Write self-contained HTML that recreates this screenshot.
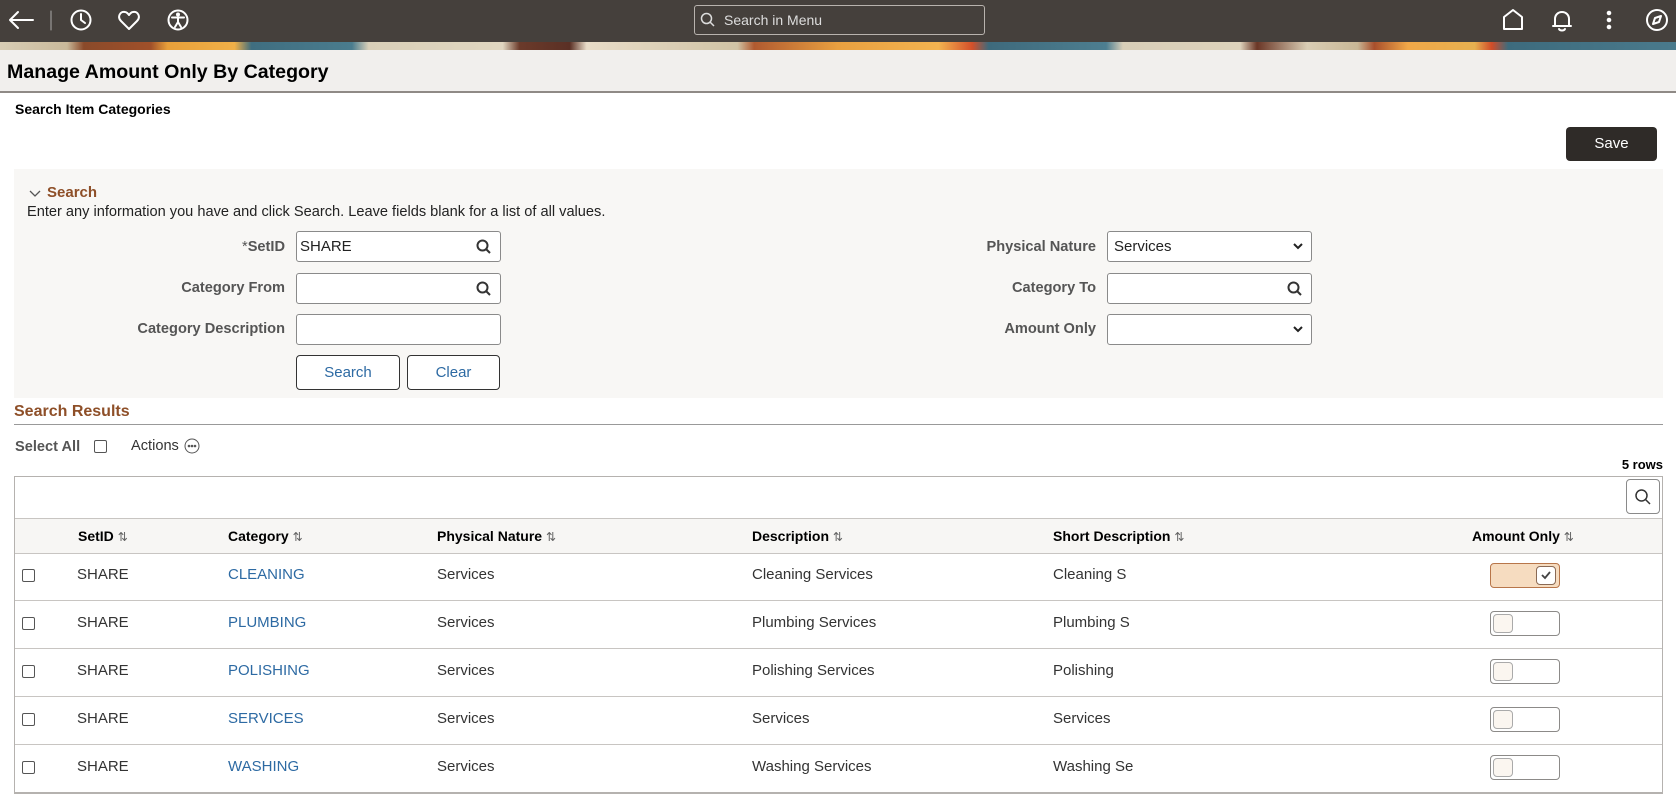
<!DOCTYPE html>
<html><head><meta charset="utf-8"><style>
*{box-sizing:border-box;margin:0;padding:0}
body{width:1676px;height:797px;overflow:hidden;background:#fff;font-family:"Liberation Sans",Arial,sans-serif;color:#333;position:relative}
.a{position:absolute}
.top{left:0;top:0;width:1676px;height:42px;background:#45403c}
.banner{left:0;top:42px;width:1676px;height:8px;background:linear-gradient(90deg,#d8cdb5 0,#c9b99a 4%,#8a4a2a 5%,#a0502a 9%,#e8a03a 10%,#f0b048 14%,#3f6e80 15%,#4a7c8e 21%,#d9cfb8 22%,#e0d6c0 30%,#6b3a2a 31%,#5a3025 34%,#e8dcc8 35%,#d0c3a5 44%,#b05a30 45%,#e9a040 50%,#f2b350 56%,#d4502a 58%,#3e6a7c 59%,#4d7e90 66%,#d8ceb8 67%,#ddd2bb 74%,#6a3626 75%,#d9cdb4 78%,#c8b796 81%,#a84f2c 82%,#f0a848 84%,#e6b050 88%,#d14c28 89%,#3d6b7d 90%,#4a7a8c 100%)}
.titlebar{left:0;top:50px;width:1676px;height:43px;background:#f1efed;border-bottom:2px solid #8f8a86}
.title{left:7px;top:61px;font-size:19.6px;font-weight:bold;color:#000}
.sub{left:15px;top:101px;font-size:14px;font-weight:bold;color:#000}
.save{left:1566px;top:127px;width:91px;height:34px;background:#2f2b28;color:#fff;border-radius:4px;font-size:15px;text-align:center;line-height:34px}
.panel{left:14px;top:169px;width:1649px;height:229px;background:#f8f7f5}
.lbl{font-size:14.6px;font-weight:bold;color:#555;text-align:right;width:260px}
.inp{background:#fff;border:1px solid #8a8a8a;border-radius:3px;height:31px}
.btn{background:#fff;border:1px solid #333;border-radius:4px;height:35px;color:#2d6aa3;font-size:15px;text-align:center;line-height:33px}
.brown{color:#8e4f28;font-weight:bold}
.th{top:519px;height:34px;line-height:34px;font-size:14px;font-weight:bold;color:#000}
.td{font-size:15px;color:#333}
.lnk{color:#2d6aa3}
.cb{width:13px;height:13px;border:1px solid #555;border-radius:2px;background:#fff}
.row{left:15px;width:1647px;height:1px;background:#c8c5c2}
.tog{width:70px;height:25px;border:1px solid #8c8a88;border-radius:4px;background:#fff}
.tog i{position:absolute;left:2px;top:2px;width:20px;height:19px;border:1px solid #aaa;border-radius:4px;background:#fbf6f0}
.sort{font-weight:normal;color:#666;font-size:12px}
</style></head><body>
<div class="a top"></div>
<svg class="a" style="left:0;top:0" width="1676" height="42" fill="none" stroke="#fff" stroke-width="2" stroke-linecap="round" stroke-linejoin="round">
<path d="M10 20H33M10 20L18 12M10 20L18 28"/>
<path d="M51 11V30" stroke="#aaa" stroke-width="1"/>
<circle cx="81" cy="20" r="9.5"/><path d="M81 14V20L85 23"/>
<path d="M129 29L121 21C117 17 120 11 125 12C127 12 128 14 129 15C130 14 131 12 133 12C138 11 141 17 137 21Z"/>
<circle cx="178" cy="20" r="9.5"/><circle cx="178" cy="14.5" r="1" fill="#fff"/><path d="M172 17.5H184M178 18V22L175 27M178 22L181 27"/>
<path d="M1504 17L1513 10L1522 17V29H1504Z"/>
<path d="M1555 26V19C1555 15 1558 12 1562 12C1566 12 1569 15 1569 19V26H1555M1553 26H1571M1559 29C1560 31 1564 31 1565 29"/>
<circle cx="1609" cy="13" r="1.3" fill="#fff"/><circle cx="1609" cy="20" r="1.3" fill="#fff"/><circle cx="1609" cy="27" r="1.3" fill="#fff"/>
<circle cx="1657" cy="20" r="10"/><path d="M1661 16L1659 22L1653 24L1655 18Z"/>
</svg>
<div class="a" style="left:694px;top:5px;width:291px;height:30px;border:1px solid #b8b3ae;border-radius:3px;background:#45403c"></div>
<svg class="a" style="left:700px;top:12px" width="16" height="16" fill="none" stroke="#ddd" stroke-width="1.5"><circle cx="6.5" cy="6.5" r="5"/><path d="M10 10L14 14"/></svg>
<div class="a" style="left:724px;top:12px;font-size:14px;color:#ddd">Search in Menu</div>
<div class="a banner"></div>
<div class="a titlebar"></div>
<div class="a title">Manage Amount Only By Category</div>
<div class="a sub">Search Item Categories</div>
<div class="a save">Save</div>
<div class="a panel"></div>
<svg class="a" style="left:29px;top:189px" width="12" height="10" fill="none" stroke="#555" stroke-width="1.3"><path d="M1 2L6 7L11 2"/></svg>
<div class="a brown" style="left:47px;top:184px;font-size:15px">Search</div>
<div class="a" style="left:27px;top:204px;font-size:14.6px;color:#222">Enter any information you have and click Search. Leave fields blank for a list of all values.</div>

<div class="a lbl" style="left:25px;top:239px"><span style="font-weight:normal">*</span>SetID</div>
<div class="a inp" style="left:296px;top:231px;width:205px"></div>
<div class="a" style="left:300px;top:238px;font-size:15px;color:#222">SHARE</div>
<div class="a lbl" style="left:25px;top:280px">Category From</div>
<div class="a inp" style="left:296px;top:273px;width:205px"></div>
<div class="a lbl" style="left:25px;top:321px">Category Description</div>
<div class="a inp" style="left:296px;top:314px;width:205px"></div>
<div class="a btn" style="left:296px;top:355px;width:104px">Search</div>
<div class="a btn" style="left:407px;top:355px;width:93px">Clear</div>
<svg class="a" style="left:476px;top:239px" width="16" height="16" fill="none" stroke="#333" stroke-width="2"><circle cx="6.5" cy="6.5" r="5"/><path d="M10 10L14 14"/></svg>
<svg class="a" style="left:476px;top:281px" width="16" height="16" fill="none" stroke="#333" stroke-width="2"><circle cx="6.5" cy="6.5" r="5"/><path d="M10 10L14 14"/></svg>

<div class="a lbl" style="left:836px;top:239px">Physical Nature</div>
<div class="a inp" style="left:1107px;top:231px;width:205px"></div>
<div class="a" style="left:1114px;top:238px;font-size:15px;color:#222">Services</div>
<div class="a lbl" style="left:836px;top:280px">Category To</div>
<div class="a inp" style="left:1107px;top:273px;width:205px"></div>
<div class="a lbl" style="left:836px;top:321px">Amount Only</div>
<div class="a inp" style="left:1107px;top:314px;width:205px"></div>
<svg class="a" style="left:1293px;top:242px" width="10" height="8" fill="none" stroke="#222" stroke-width="2"><path d="M1 2L5 6L9 2"/></svg>
<svg class="a" style="left:1293px;top:325px" width="10" height="8" fill="none" stroke="#222" stroke-width="2"><path d="M1 2L5 6L9 2"/></svg>
<svg class="a" style="left:1287px;top:281px" width="16" height="16" fill="none" stroke="#333" stroke-width="2"><circle cx="6.5" cy="6.5" r="5"/><path d="M10 10L14 14"/></svg>

<div class="a brown" style="left:14px;top:403px;font-size:16px">Search Results</div>
<div class="a" style="left:14px;top:424px;width:1649px;height:1px;background:#999"></div>
<div class="a" style="left:15px;top:439px;font-size:14.6px;font-weight:bold;color:#555">Select All</div>
<div class="a cb" style="left:94px;top:440px"></div>
<div class="a" style="left:131px;top:438px;font-size:14.6px;color:#333">Actions</div>
<svg class="a" style="left:184px;top:438px" width="16" height="16" fill="none" stroke="#555" stroke-width="1"><circle cx="8" cy="8" r="7"/><circle cx="5" cy="8" r=".8" fill="#555"/><circle cx="8" cy="8" r=".8" fill="#555"/><circle cx="11" cy="8" r=".8" fill="#555"/></svg>
<div class="a" style="left:1600px;top:457px;width:63px;text-align:right;font-size:13px;font-weight:bold;color:#000">5 rows</div>

<div class="a" style="left:14px;top:476px;width:1649px;height:318px;border:1px solid #b5b2af;border-bottom:2px solid #b5b2af"></div>
<div class="a" style="left:15px;top:519px;width:1647px;height:34px;background:#f7f6f4"></div>
<div class="a row" style="top:518px"></div>
<div class="a row" style="top:553px"></div>
<div class="a row" style="top:600px"></div>
<div class="a row" style="top:648px"></div>
<div class="a row" style="top:696px"></div>
<div class="a row" style="top:744px"></div>
<div class="a" style="left:1626px;top:479px;width:34px;height:35px;border:1px solid #8a8a8a;border-radius:4px;background:#fff"></div>
<svg class="a" style="left:1634px;top:488px" width="18" height="18" fill="none" stroke="#333" stroke-width="1.5"><circle cx="7.5" cy="7.5" r="5.5"/><path d="M11.5 11.5L16 16"/></svg>

<div class="a th" style="left:78px">SetID <span class="sort">⇅</span></div>
<div class="a th" style="left:228px">Category <span class="sort">⇅</span></div>
<div class="a th" style="left:437px">Physical Nature <span class="sort">⇅</span></div>
<div class="a th" style="left:752px">Description <span class="sort">⇅</span></div>
<div class="a th" style="left:1053px">Short Description <span class="sort">⇅</span></div>
<div class="a th" style="left:1472px">Amount Only <span class="sort">⇅</span></div>

<div class="a cb" style="left:22px;top:569px"></div>
<div class="a td" style="left:77px;top:566px">SHARE</div><div class="a td lnk" style="left:228px;top:566px">CLEANING</div><div class="a td" style="left:437px;top:566px">Services</div><div class="a td" style="left:752px;top:566px">Cleaning Services</div><div class="a td" style="left:1053px;top:566px">Cleaning S</div>
<div class="a tog" style="left:1490px;top:563px;background:#f6dcc0;border-color:#b8764a"><i style="left:45px;background:#fff;border-color:#8a6a55"></i></div>
<svg class="a" style="left:1540px;top:569px" width="12" height="12" fill="none" stroke="#444" stroke-width="1.8"><path d="M2 6L5 9L10 3"/></svg>

<div class="a cb" style="left:22px;top:617px"></div>
<div class="a td" style="left:77px;top:614px">SHARE</div><div class="a td lnk" style="left:228px;top:614px">PLUMBING</div><div class="a td" style="left:437px;top:614px">Services</div><div class="a td" style="left:752px;top:614px">Plumbing Services</div><div class="a td" style="left:1053px;top:614px">Plumbing S</div>
<div class="a tog" style="left:1490px;top:611px"><i></i></div>

<div class="a cb" style="left:22px;top:665px"></div>
<div class="a td" style="left:77px;top:662px">SHARE</div><div class="a td lnk" style="left:228px;top:662px">POLISHING</div><div class="a td" style="left:437px;top:662px">Services</div><div class="a td" style="left:752px;top:662px">Polishing Services</div><div class="a td" style="left:1053px;top:662px">Polishing</div>
<div class="a tog" style="left:1490px;top:659px"><i></i></div>

<div class="a cb" style="left:22px;top:713px"></div>
<div class="a td" style="left:77px;top:710px">SHARE</div><div class="a td lnk" style="left:228px;top:710px">SERVICES</div><div class="a td" style="left:437px;top:710px">Services</div><div class="a td" style="left:752px;top:710px">Services</div><div class="a td" style="left:1053px;top:710px">Services</div>
<div class="a tog" style="left:1490px;top:707px"><i></i></div>

<div class="a cb" style="left:22px;top:761px"></div>
<div class="a td" style="left:77px;top:758px">SHARE</div><div class="a td lnk" style="left:228px;top:758px">WASHING</div><div class="a td" style="left:437px;top:758px">Services</div><div class="a td" style="left:752px;top:758px">Washing Services</div><div class="a td" style="left:1053px;top:758px">Washing Se</div>
<div class="a tog" style="left:1490px;top:755px"><i></i></div>
</body></html>
